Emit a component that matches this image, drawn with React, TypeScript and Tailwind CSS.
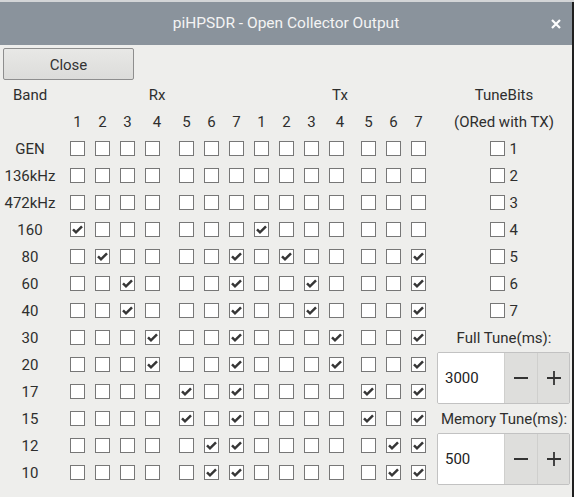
import React from 'react';

const BANDS = ['GEN', '136kHz', '472kHz', '160', '80', '60', '40', '30', '20', '17', '15', '12', '10'];

// checked bit columns (0-based) per band, same for Rx and Tx
const CHECKED: Record<string, number[]> = {
  '160': [0],
  '80': [1, 6],
  '60': [2, 6],
  '40': [2, 6],
  '30': [3, 6],
  '20': [3, 6],
  '17': [4, 6],
  '15': [4, 6],
  '12': [5, 6],
  '10': [5, 6],
};

const FONT = { fontFamily: 'Roboto, "Noto Sans", sans-serif' };

function CheckBox({ checked }: { checked?: boolean }) {
  return (
    <div className="w-[15px] h-[15px] shrink-0 border border-[#777777] bg-white flex">
      {checked && (
        <svg width="13" height="13" viewBox="1 1 13 13">
          <path d="M3 7.3 L6 10.3 L12 4.3" fill="none" stroke="#363636" strokeWidth="2.5" />
        </svg>
      )}
    </div>
  );
}

function HeaderNum({ n, wide }: { n: number; wide?: number }) {
  return (
    <div className="flex items-center pt-[1px]">
      <div className={`${wide === 24 ? 'w-[24px]' : wide === 22 ? 'w-[22px]' : 'w-[15px]'} text-center`}>{n}</div>
    </div>
  );
}

function Spin({ value }: { value: string }) {
  return (
    <div className="row-span-2 flex my-[1px] ml-[1px] mr-[2px] border border-[#c2c2c2] rounded-[2px] overflow-hidden">
      <div className="w-[66px] bg-white flex items-center pl-[7px] pt-[1px] text-[#222]">{value}</div>
      <div className="w-[33px] bg-[#dededc] border-l border-[#cfcfcd] flex items-center justify-center">
        <svg width="16" height="16" viewBox="0 0 16 16">
          <path d="M1 8 H15" stroke="#333" strokeWidth="1.8" />
        </svg>
      </div>
      <div className="flex-1 bg-[#dededc] border-l border-[#cfcfcd] flex items-center justify-center">
        <svg width="16" height="16" viewBox="0 0 16 16">
          <path d="M1 8 H15 M8 1 V15" stroke="#333" strokeWidth="1.8" />
        </svg>
      </div>
    </div>
  );
}

export default function App() {
  const rightCell = (i: number) => {
    if (i < 7) {
      return (
        <div className="flex items-center justify-center gap-[5px]">
          <CheckBox />
          <span className="w-[9px] pt-[1px]">{i + 1}</span>
        </div>
      );
    }
    if (i === 7) return <div className="flex items-center justify-center pt-[1px]">Full Tune(ms):</div>;
    if (i === 8) return <Spin value="3000" />;
    if (i === 10) return <div className="flex items-center justify-center pt-[1px]">Memory Tune(ms):</div>;
    if (i === 11) return <Spin value="500" />;
    return null;
  };

  return (
    <div className="w-[574px] h-[497px] overflow-hidden bg-[#d3d5d7] flex flex-col" style={FONT}>
      <div className="h-[2px] shrink-0" />
      <div className="flex flex-1">
        <div className="w-[572px] flex flex-col bg-[#eeeeec] text-[15px] text-[#2e2e2e]">
          {/* title bar */}
          <div className="h-[43px] shrink-0 bg-[#8a939c] grid grid-cols-[1fr_auto_1fr] items-center">
            <div />
            <div className="text-[15.5px] text-[#f4f4f4]">piHPSDR - Open Collector Output</div>
            <div className="flex justify-end pr-[11px]">
              <svg width="10" height="10" viewBox="0 0 10 10">
                <path d="M1 1 L9 9 M9 1 L1 9" stroke="#ffffff" strokeWidth="2.2" />
              </svg>
            </div>
          </div>

          <div className="pl-[3px] pt-[3px]">
            <button className="w-[131px] h-[32px] pt-[2px] border border-[#8e8e8e] rounded-[2px] bg-gradient-to-b from-[#e8e8e6] to-[#dcdcda] text-[15px] text-[#333]">
              Close
            </button>
          </div>

          <div className="mt-[1px] grid grid-cols-[70px_25px_25px_25px_34px_25px_25px_25px_25px_25px_25px_32px_25px_25px_25px_136px] auto-rows-[27px]">
            {/* header row 1 */}
            <div className="flex items-center pt-[1px]"><div className="w-[60px] text-center">Band</div></div>
            <div /><div /><div />
            <div className="flex items-center pt-[1px]"><div className="w-[24px] text-center">Rx</div></div>
            <div /><div /><div /><div /><div /><div />
            <div className="flex items-center pt-[1px]"><div className="w-[22px] text-center">Tx</div></div>
            <div /><div /><div />
            <div className="flex items-center justify-center pt-[1px]">TuneBits</div>

            {/* header row 2 */}
            <div />
            {[1, 2, 3, 4, 5, 6, 7].map((n) => (
              <HeaderNum key={'r' + n} n={n} wide={n === 4 ? 24 : undefined} />
            ))}
            {[1, 2, 3, 4, 5, 6, 7].map((n) => (
              <HeaderNum key={'t' + n} n={n} wide={n === 4 ? 22 : undefined} />
            ))}
            <div className="flex items-center justify-center pt-[1px]">(ORed with TX)</div>

            {BANDS.map((b, i) => {
              const on = CHECKED[b] || [];
              return (
                <React.Fragment key={b}>
                  <div className="flex items-center pt-[1px]"><div className="w-[60px] text-center">{b}</div></div>
                  {[0, 1, 2, 3, 4, 5, 6].map((c) => (
                    <div key={'rx' + c} className="flex items-center">
                      <CheckBox checked={on.includes(c)} />
                    </div>
                  ))}
                  {[0, 1, 2, 3, 4, 5, 6].map((c) => (
                    <div key={'tx' + c} className="flex items-center">
                      <CheckBox checked={on.includes(c)} />
                    </div>
                  ))}
                  {rightCell(i)}
                </React.Fragment>
              );
            })}
          </div>
        </div>
        <div className="w-[2px] bg-[#1f1f1f]" />
      </div>
    </div>
  );
}
